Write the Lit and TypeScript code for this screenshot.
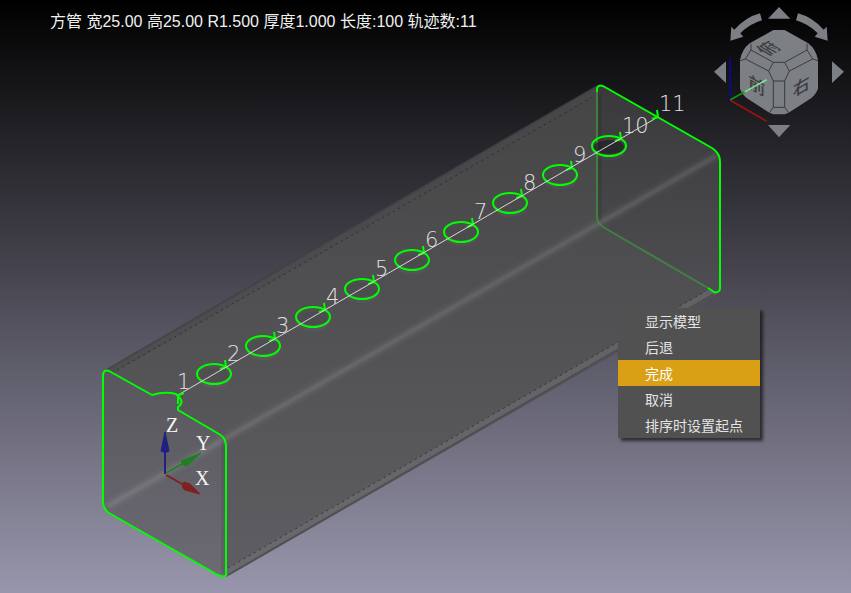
import { LitElement, html, css, svg } from "lit";
import { customElement, state } from "lit/decorators.js";

const HOLES = Array.from({ length: 9 }, (_, i) => ({
  id: i + 2,
  x: Math.round(214 + i * 49.4),
  y: Math.round(374 - i * 28.5),
}));

@customElement("tube-scene")
class TubeScene extends LitElement {
  static styles = css`
    :host { display: block; width: 100%; height: 100%; }
    svg { display: block; width: 100%; height: 100%; }
    .wall { fill: #515151; fill-opacity: 0.8; }
    .end { fill: #515151; fill-opacity: 0.6; }
    .edge { fill: none; stroke: #00ff00; stroke-width: 2; stroke-linejoin: round; }
    .hidden { stroke: #3f8f3f; stroke-opacity: 0.8; }
    .path { stroke: #d8d8d8; stroke-width: 1; }
    .shine { stroke: #ffffff; stroke-linecap: round; }
    .shine-wide { stroke-width: 14; stroke-opacity: 0.02; }
    .shine-mid { stroke-width: 8; stroke-opacity: 0.04; }
    .shine-core { stroke-width: 4; stroke-opacity: 0.06; }
    .crease { stroke: #202022; stroke-width: 1; stroke-opacity: 0.7; stroke-dasharray: 2 4; }
    .rim { stroke: #404044; stroke-width: 2; stroke-opacity: 0.6; }
    .shade { fill: #3c3c40; fill-opacity: 0.35; }
    .depth { fill: #ffffff; fill-opacity: 0.04; }
    .deep { fill: #1c1c20; fill-opacity: 0.7; }
    .band { fill: #48484c; fill-opacity: 0.4; }
    .under { fill: #77777c; fill-opacity: 0.45; }
    .strip { fill: #000000; fill-opacity: 0.08; }
    .num { font: 200 21px "DejaVu Sans", sans-serif; fill: #e0e0e0; }
    .axis { font: 20px "Liberation Serif", serif; fill: #f4f4f4; }
    .z { fill: #202080; stroke: #202080; }
    .y { fill: #208020; stroke: #208020; }
    .x { fill: #802020; stroke: #802020; }
    .shaft { stroke-width: 2; }
  `;

  render() {
    return html`<svg viewBox="0 0 851 593" preserveAspectRatio="xMidYMid slice" role="img" aria-label="方管">
      <path class="wall" d="M108 369 L597 86 V218 Q597 224 602 227 L714 291 Q720 293 714 297 L226 577 V445 Q226 438 220 434 L178 411 L181 402 L178 394 L153 395 Z"/>
      <path class="end" d="M597 90 Q597 84 603 86 L714 149 Q720 154 720 160 V288 Q720 294 714 291 L602 227 Q597 224 597 218 Z"/>
      <path class="end" d="M103 376 Q103 369 109 371 L153 395 Q165 391 178 394 L181 402 L178 411 L220 434 Q226 438 226 445 V577 H222 L108 513 Q103 509 103 502 Z"/>
      <path class="band" d="M105 370 L598 85 V94 L112 374 Z"/>
      <path class="under" d="M226 569 L708 290 L718 293 L226 577 Z"/>
      <path class="strip" d="M221 436 L226 442 V576 L221 572 Z M597 96 L602 92 V222 L597 220 Z"/>
      <line class="rim" x1="106" y1="370" x2="597" y2="86"/>
      <line class="crease" x1="112" y1="373" x2="598" y2="94"/>
      <line class="crease" x1="228" y1="568" x2="706" y2="291"/>
      <line class="rim" x1="228" y1="575" x2="714" y2="294"/>
      <line class="shine shine-wide" x1="110" y1="505" x2="714" y2="157"/>
      <line class="shine shine-mid" x1="110" y1="505" x2="714" y2="157"/>
      <line class="shine shine-core" x1="110" y1="505" x2="714" y2="157"/>
      <path class="edge hidden" d="M597 90 V216 Q597 223 603 227 L708 288"/>
      <path class="edge" d="M597 92 V90 Q597 84 603 86 L712 148 Q720 153 720 162 V288 Q720 293 714 292 L708 288"/>
      <path class="edge" d="M178 410 L219 434 Q226 438 226 446 V575 Q224 578 218 575 L109 513 Q103 509 103 502 V376 Q103 369 109 371 L152 395 Q165 391 176 394 L178 396 Q185 402 178 407 Z"/>
      ${HOLES.map((h) => svg`
        <ellipse class="depth" cx=${h.x} cy=${h.y + 4} rx="17" ry="10"/>
        <ellipse class=${h.id === 10 ? "deep" : "shade"} cx=${h.x} cy=${h.y + 1} rx="15" ry="7"/>
        <ellipse class="edge" cx=${h.x} cy=${h.y} rx="17" ry="10"/>
        <path class="edge" d="M${h.x + 11} ${h.y - 14} L${h.x + 12} ${h.y - 7} L${h.x + 6} ${h.y - 5}"/>
        <text class="num" x=${h.x + 13} y=${h.y - 13}>${h.id}</text>`)}
      <line class="path" x1="178" y1="395" x2="658" y2="117"/>
      <path class="edge" d="M657 110 L658 117 L652 119 M177 396 L184 393 M178 396 V404"/>
      <text class="num" x="177" y="389">1</text>
      <text class="num" x="659" y="111">11</text>
      <line class="z shaft" x1="165" y1="474" x2="165" y2="450"/>
      <path class="z" d="M165 432 L169 451 Q165 454 161 451 Z"/>
      <line class="y shaft" x1="166" y1="473" x2="184" y2="463"/>
      <path class="y" d="M201 453 L187 466 Q182 466 181 461 Z"/>
      <line class="x shaft" x1="166" y1="475" x2="184" y2="485"/>
      <path class="x" d="M200 494 L185 490 Q180 487 184 482 L190 484 Z"/>
      <text class="axis" x="166" y="432">Z</text>
      <text class="axis" x="196" y="450">Y</text>
      <text class="axis" x="195" y="485">X</text>
    </svg>`;
  }
}

@customElement("view-cube")
class ViewCube extends LitElement {
  static styles = css`
    :host { display: block; }
    svg { display: block; width: 151px; height: 145px; }
    .solid { fill: #7c7f84; }
    .line { fill: none; stroke: #3a3b3e; stroke-width: 3; stroke-linejoin: round; }
    .label { font: 500 51px "Noto Sans CJK SC", sans-serif; fill: #3c3d40; text-anchor: middle; }
    .red { stroke: #a01010; stroke-width: 5; }
    .blue { stroke: #0808a0; stroke-width: 5; }
    .green { stroke: #109810; stroke-width: 5; }
    .pale { stroke: #80e098; stroke-width: 5; }
  `;

  render() {
    return html`<svg viewBox="0 0 453 435" role="img" aria-label="视图">
      <path class="solid" d="M237 21 L271 56 H204 Z M237 412 L271 375 H204 Z M42 215 L78 184 V249 Z M432 215 L396 184 V249 Z"/>
      <path class="solid" d="M180 40 L186 61 Q148 72 121 100 L130 110 L91 122 L94 80 L103 89 Q138 51 180 40 Z"/>
      <path class="solid" d="M294 40 L288 61 Q326 72 353 100 L344 110 L383 122 L380 80 L371 89 Q336 51 294 40 Z"/>
      <path class="solid" d="M220 90 H254 L325 130 Q348 148 354 180 V266 Q346 288 325 300 L266 338 L254 343 H220 L208 338 L149 300 Q128 288 120 266 V180 Q126 148 149 130 Z"/>
      <path class="line" d="M220 187 H254 L268 213 L254 243 H220 L206 213 Z M220 187 L153 150 V131 M206 213 L136 177 L120 182 M136 177 L153 150 M254 187 L321 150 V131 M268 213 L338 177 L354 182 M338 177 L321 150 M220 243 V322 L208 338 M254 243 V322 L266 338 M220 322 H254"/>
      <text class="label" transform="translate(170 276) skewY(30)">前</text>
      <text class="label" transform="translate(304 278) skewY(-30)">右</text>
      <text class="label" transform="translate(224 156) rotate(-30) skewX(30)">俯</text>
      <line class="blue" x1="91" y1="175" x2="91" y2="300"/>
      <line class="red" x1="91" y1="301" x2="200" y2="364"/>
      <line class="green" x1="91" y1="299" x2="146" y2="269"/>
      <line class="pale" x1="134" y1="276" x2="200" y2="239"/>
    </svg>`;
  }
}

@customElement("app-root")
class AppRoot extends LitElement {
  @state() active = "完成";

  static styles = css`
    :host {
      display: block;
      position: relative;
      height: 100vh;
      overflow: hidden;
      background: linear-gradient(#000000, #9896ac);
      font-family: "Liberation Sans", "Noto Sans CJK SC", sans-serif;
    }
    .info { position: absolute; left: 50px; top: 10px; margin: 0; font-size: 16px; line-height: 24px; color: #f0f0f0; white-space: nowrap; }
    .cube { position: absolute; right: 0; top: 0; }
    .menu {
      position: absolute;
      left: 618px;
      top: 308px;
      display: flex;
      flex-direction: column;
      width: 142px;
      background: #515151;
      box-shadow: 3px 3px 3px rgba(0, 0, 0, 0.6);
    }
    .item {
      border: 0;
      padding: 0 0 0 27px;
      height: 26px;
      line-height: 26px;
      text-align: left;
      white-space: nowrap;
      background: none;
      color: #e4e4e4;
      font-family: "Noto Sans CJK SC", sans-serif;
      font-size: 14px;
    }
    .item.on { background: #d9a015; color: #ffffff; }
  `;

  render() {
    const items = ["显示模型", "后退", "完成", "取消", "排序时设置起点"];
    return html`
      <tube-scene></tube-scene>
      <p class="info">方管 宽25.00 高25.00 R1.500 厚度1.000 长度:100 轨迹数:11</p>
      <view-cube class="cube"></view-cube>
      <div class="menu" role="menu">
        ${items.map((t) => html`<button role="menuitem" class="item ${t === this.active ? "on" : ""}"
          @mouseenter=${() => (this.active = t)}>${t}</button>`)}
      </div>`;
  }
}
